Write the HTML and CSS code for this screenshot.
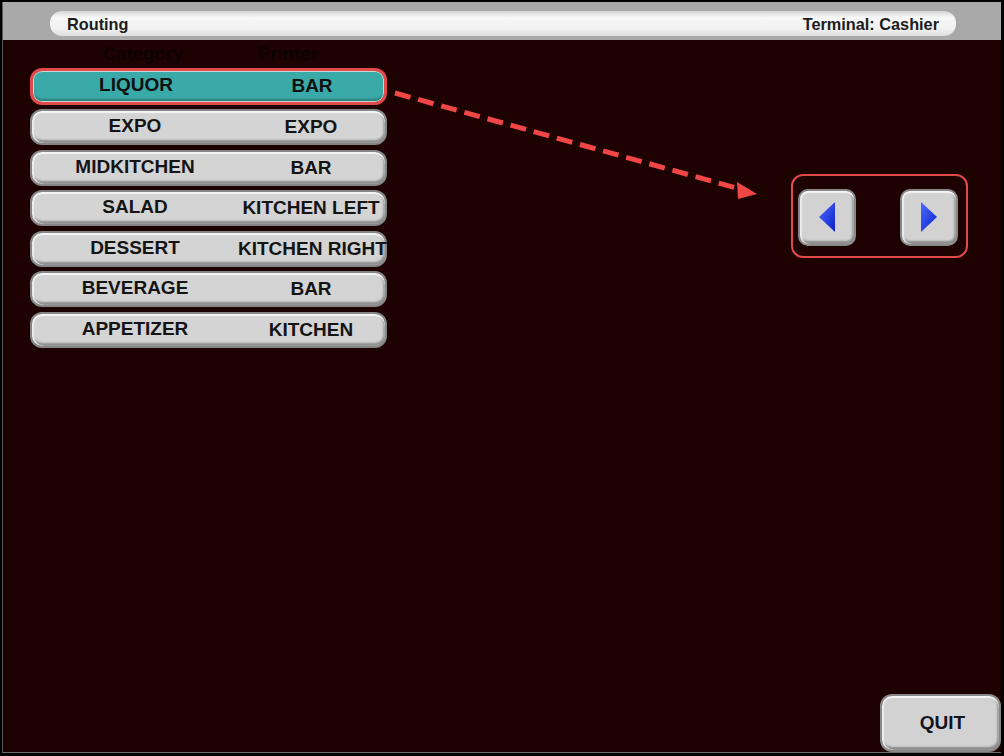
FILE: index.html
```html
<!DOCTYPE html>
<html lang="en">
<head>
  <meta charset="UTF-8" />
  <title>Routing</title>
  <link rel="stylesheet" href="styles.css">
</head>
<body>
<div class="screen">
  <div class="titlebar">
    <div class="title-pill">
      <span>Routing</span>
      <span>Terminal: Cashier</span>
    </div>
  </div>
  <div class="main">
    <div class="route-list">
      <div class="col-head">
        <span class="head-cat">Category</span>
        <span class="head-prn">Printer</span>
      </div>
      <div class="route-row selected"><span class="cat">LIQUOR</span><span class="prn">BAR</span></div>
      <div class="route-row"><span class="cat">EXPO</span><span class="prn">EXPO</span></div>
      <div class="route-row"><span class="cat">MIDKITCHEN</span><span class="prn">BAR</span></div>
      <div class="route-row"><span class="cat">SALAD</span><span class="prn">KITCHEN LEFT</span></div>
      <div class="route-row"><span class="cat">DESSERT</span><span class="prn">KITCHEN RIGHT</span></div>
      <div class="route-row"><span class="cat">BEVERAGE</span><span class="prn">BAR</span></div>
      <div class="route-row"><span class="cat">APPETIZER</span><span class="prn">KITCHEN</span></div>
    </div>

    <div class="side">
      <div class="pager">
        <button class="page-btn" title="Previous">
          <svg width="16" height="30" viewBox="0 0 16 30">
            <defs>
              <linearGradient id="tl" x1="0" y1="0" x2="1" y2="1">
                <stop offset="0" stop-color="#4a6bff"/>
                <stop offset="1" stop-color="#0d20c8"/>
              </linearGradient>
            </defs>
            <polygon points="0,15 16,0 16,30" fill="url(#tl)"/>
          </svg>
        </button>
        <button class="page-btn" title="Next">
          <svg width="16" height="30" viewBox="0 0 16 30">
            <defs>
              <linearGradient id="tr" x1="0" y1="0" x2="1" y2="1">
                <stop offset="0" stop-color="#4a6bff"/>
                <stop offset="1" stop-color="#0d20c8"/>
              </linearGradient>
            </defs>
            <polygon points="0,0 16,15 0,30" fill="url(#tr)"/>
          </svg>
        </button>
      </div>
      <button class="quit-btn">QUIT</button>
    </div>

    <!-- dashed pointer from the selected row to the pager -->
    <svg class="pointer" width="1000" height="200" viewBox="0 0 1000 200">
      <line x1="392" y1="53" x2="737" y2="149" stroke="#f04646" stroke-width="5" stroke-dasharray="16 8"/>
      <polygon points="754,154 734,142 735,159" fill="#f04646"/>
    </svg>
  </div>
</div>
</body>
</html>
```

FILE: styles.css
```css
body {
  margin: 0;
  background: #000;
  font-family: "Liberation Sans", Arial, sans-serif;
}
.screen {
  margin: 2px 0 0 2px;
  width: 999px;
  height: 751px;
  box-sizing: border-box;
  border-left: 1px solid #5a5a5a;
  border-bottom: 1px solid #6a6a6a;
  display: flex;
  flex-direction: column;
}
.titlebar {
  height: 38px;
  box-sizing: border-box;
  background: #a9a9a9;
  padding: 9px 45px 0 47px;
}
.title-pill {
  height: 24px;
  border-radius: 12px;
  background: linear-gradient(#d6d6d6, #f7f7f7 25%, #f2f2f2 70%, #dedede);
  display: flex;
  align-items: center;
  justify-content: space-between;
  padding: 1px 17px 0;
  font-weight: 700;
  font-size: 16.3px;
  color: #1c1c1c;
}
.main {
  flex: 1;
  position: relative;
  background: #1e0202;
  display: flex;
}
.route-list {
  margin-left: 27px;
  width: 357px;
  display: flex;
  flex-direction: column;
  gap: 4.5px;
}
.col-head {
  height: 24px;
  margin: 2px 0 -2px;
  display: flex;
  align-items: center;
  font-weight: 700;
  font-size: 18.5px;
  color: #0e0101;
}
.head-cat { margin-left: 73px; width: 155px; }
.route-row {
  height: 36px;
  box-sizing: border-box;
  display: grid;
  grid-template-columns: 206px 146px;
  align-items: center;
  border: 2px solid #868686;
  border-radius: 12px;
  background: #d4d4d4;
  box-shadow: inset 0 2px 1px #f6f6f6, inset 2px 0 1px #ececec, inset 0 -3px 2px #8e8e8e, inset -2px 0 2px #a6a6a6;
  font-weight: 700;
  font-size: 19px;
  color: #141414;
  white-space: nowrap;
}
.route-row .cat { text-align: center; margin-top: -2px; }
.route-row .prn { text-align: center; }
.route-row.selected {
  height: 37px;
  margin-top: -1px;
  border: 3px solid #e24a4a;
  background: #3aaaa8;
  box-shadow: inset 0 0 0 1px #c9d6d6, inset 0 -3px 2px #2a7c7a;
  color: #101010;
}
.side {
  margin-left: auto;
  display: flex;
  flex-direction: column;
  align-items: flex-end;
}
.pager {
  margin: 134px 33px 0 0;
  width: 177px;
  height: 84px;
  box-sizing: border-box;
  border: 2.5px solid #e24a4a;
  border-radius: 12px;
  display: flex;
  justify-content: space-between;
  align-items: flex-start;
  padding: 13px 8px 0 5px;
}
.page-btn, .quit-btn {
  border: 2px solid #888;
  background: #d2d2d2;
  box-shadow: inset 0 2px 1px #f6f6f6, inset 2px 0 1px #ececec, inset 0 -3px 2px #8a8a8a, inset -2px 0 2px #a0a0a0;
  padding: 0;
  cursor: pointer;
}
.page-btn {
  width: 58px;
  height: 57px;
  border-radius: 10px;
  display: flex;
  align-items: center;
  justify-content: center;
}
.page-btn svg { display: block; margin-top: -1px; }
.quit-btn {
  margin-top: auto;
  width: 121px;
  height: 58px;
  border-radius: 12px;
  font-family: "Liberation Sans", Arial, sans-serif;
  font-weight: 700;
  font-size: 19px;
  color: #14141e;
  padding-left: 4px;
}
.pointer {
  position: absolute;
  left: 0;
  top: 0;
  pointer-events: none;
}
```
